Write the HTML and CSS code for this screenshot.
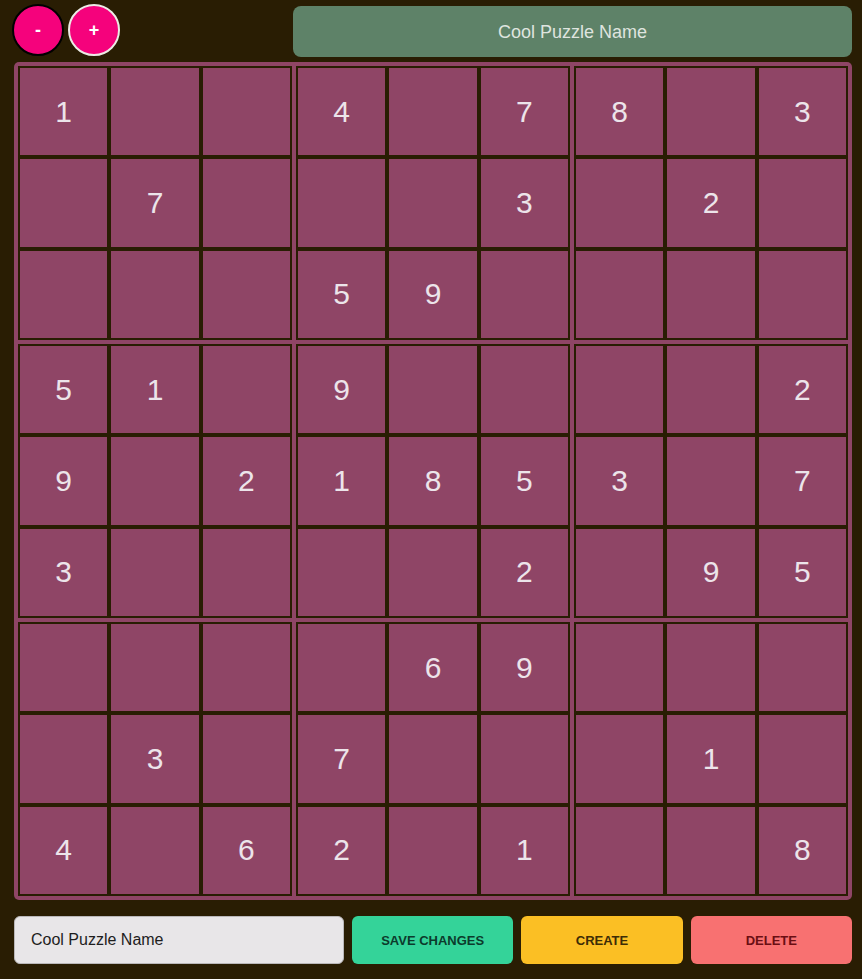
FILE: index.html
```html
<!DOCTYPE html>
<html lang="en">
<head>
<meta charset="utf-8">
<title>Sudoku Editor</title>
<link rel="stylesheet" href="styles.css">
</head>
<body>
<div class="app">
  <header class="top">
    <div class="zoom">
      <button class="circle minus">-</button>
      <button class="circle plus">+</button>
    </div>
    <div class="title">Cool Puzzle Name</div>
  </header>

  <div class="board">
    <div class="box">
      <div class="cell">1</div><div class="cell"></div><div class="cell"></div>
      <div class="cell"></div><div class="cell">7</div><div class="cell"></div>
      <div class="cell"></div><div class="cell"></div><div class="cell"></div>
    </div>
    <div class="box">
      <div class="cell">4</div><div class="cell"></div><div class="cell">7</div>
      <div class="cell"></div><div class="cell"></div><div class="cell">3</div>
      <div class="cell">5</div><div class="cell">9</div><div class="cell"></div>
    </div>
    <div class="box">
      <div class="cell">8</div><div class="cell"></div><div class="cell">3</div>
      <div class="cell"></div><div class="cell">2</div><div class="cell"></div>
      <div class="cell"></div><div class="cell"></div><div class="cell"></div>
    </div>
    <div class="box">
      <div class="cell">5</div><div class="cell">1</div><div class="cell"></div>
      <div class="cell">9</div><div class="cell"></div><div class="cell">2</div>
      <div class="cell">3</div><div class="cell"></div><div class="cell"></div>
    </div>
    <div class="box">
      <div class="cell">9</div><div class="cell"></div><div class="cell"></div>
      <div class="cell">1</div><div class="cell">8</div><div class="cell">5</div>
      <div class="cell"></div><div class="cell"></div><div class="cell">2</div>
    </div>
    <div class="box">
      <div class="cell"></div><div class="cell"></div><div class="cell">2</div>
      <div class="cell">3</div><div class="cell"></div><div class="cell">7</div>
      <div class="cell"></div><div class="cell">9</div><div class="cell">5</div>
    </div>
    <div class="box">
      <div class="cell"></div><div class="cell"></div><div class="cell"></div>
      <div class="cell"></div><div class="cell">3</div><div class="cell"></div>
      <div class="cell">4</div><div class="cell"></div><div class="cell">6</div>
    </div>
    <div class="box">
      <div class="cell"></div><div class="cell">6</div><div class="cell">9</div>
      <div class="cell">7</div><div class="cell"></div><div class="cell"></div>
      <div class="cell">2</div><div class="cell"></div><div class="cell">1</div>
    </div>
    <div class="box">
      <div class="cell"></div><div class="cell"></div><div class="cell"></div>
      <div class="cell"></div><div class="cell">1</div><div class="cell"></div>
      <div class="cell"></div><div class="cell"></div><div class="cell">8</div>
    </div>
  </div>

  <div class="actions">
    <input class="name-input" type="text" value="Cool Puzzle Name">
    <button class="btn save">SAVE CHANGES</button>
    <button class="btn create">CREATE</button>
    <button class="btn delete">DELETE</button>
  </div>
</div>
</body>
</html>
```

FILE: styles.css
```css
* { box-sizing: border-box; }

html, body {
  margin: 0;
  padding: 0;
  background: #291d03;
  font-family: "Liberation Sans", Arial, sans-serif;
}

.app {
  width: 862px;
  padding: 4px 10px 0 14px;
}

.top {
  display: flex;
  align-items: flex-start;
  justify-content: space-between;
  height: 52px;
}

.zoom {
  display: flex;
  gap: 4px;
  margin-left: -2px;
}

.circle {
  width: 52px;
  height: 52px;
  border-radius: 50%;
  background: #f5027c;
  color: #ffffff;
  font-family: "Liberation Sans", Arial, sans-serif;
  font-weight: bold;
  font-size: 18px;
  padding: 0;
  display: flex;
  align-items: center;
  justify-content: center;
}

.minus { border: 2px solid #000000; }
.plus { border: 2px solid #ecebe6; }

.title {
  width: 559px;
  height: 51px;
  margin-top: 2px;
  padding-top: 2px;
  background: #5e8268;
  border-radius: 8px;
  color: #dfe4df;
  font-size: 18px;
  display: flex;
  align-items: center;
  justify-content: center;
}

.board {
  margin-top: 6px;
  width: 838px;
  height: 838px;
  background: #8f4566;
  border-radius: 5px;
  padding: 4px;
  display: grid;
  grid-template-columns: repeat(3, 1fr);
  grid-template-rows: repeat(3, 1fr);
  gap: 4px;
}

.box {
  display: grid;
  grid-template-columns: repeat(3, 1fr);
  grid-template-rows: repeat(3, 1fr);
}

.cell {
  border: 2px solid #291d03;
  background: #8f4566;
  color: #ece4ea;
  font-size: 30px;
  display: flex;
  align-items: center;
  justify-content: center;
}

.actions {
  margin-top: 16px;
  display: grid;
  grid-template-columns: 330px 1fr 1fr 1fr;
  gap: 8px;
  height: 48px;
}

.name-input {
  height: 48px;
  border: 1px solid #b9b7b9;
  border-radius: 6px;
  background: #e8e6e8;
  color: #1d1d1d;
  font-family: "Liberation Sans", Arial, sans-serif;
  font-size: 16px;
  padding: 0 0 0 16px;
  outline: none;
}

.btn {
  height: 48px;
  border: none;
  border-radius: 6px;
  font-family: "Liberation Sans", Arial, sans-serif;
  font-weight: bold;
  font-size: 13px;
  cursor: pointer;
}

.save { background: #34d399; color: #0c3b2c; }
.create { background: #fbbf24; color: #3d2c06; }
.delete { background: #f87171; color: #6a0e13; }
```
